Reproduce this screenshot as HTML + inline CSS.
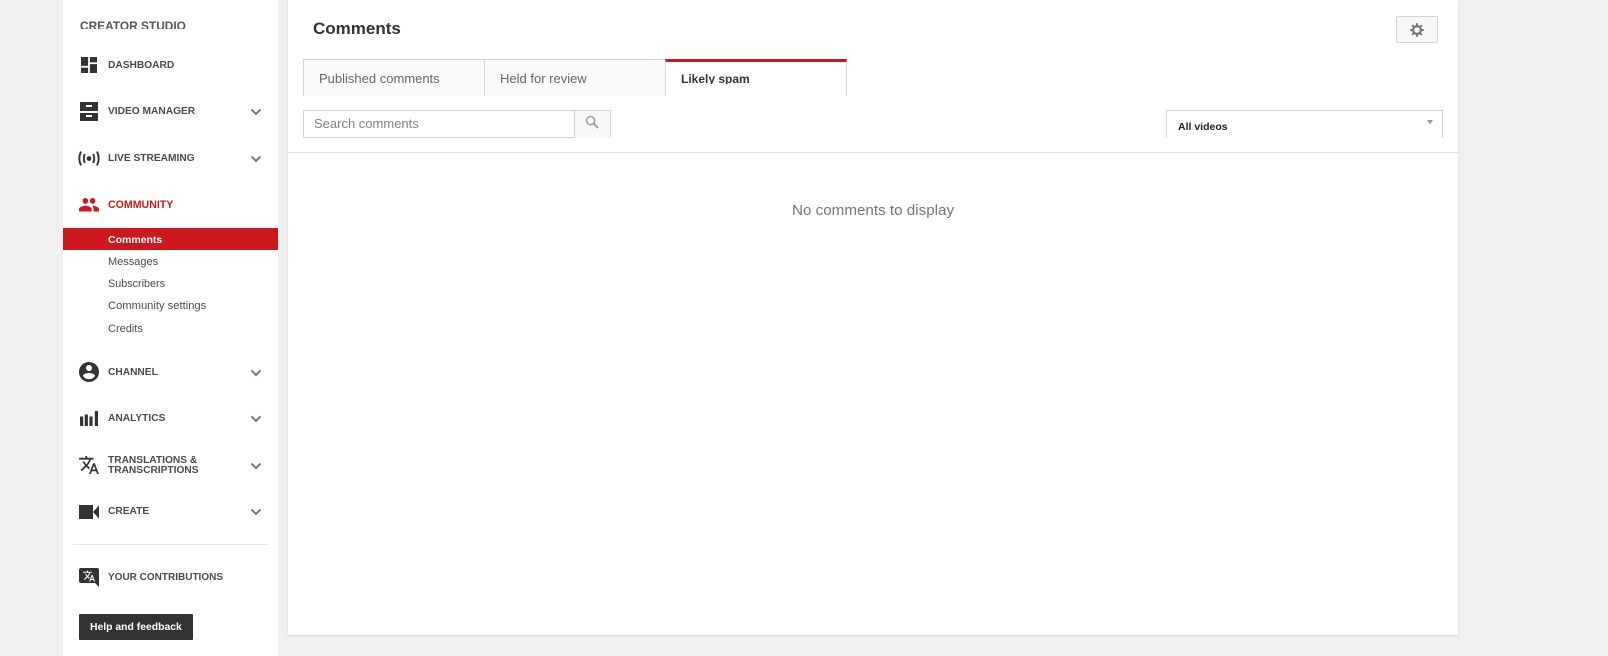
<!DOCTYPE html>
<html><head><meta charset="utf-8">
<style>
html,body{margin:0;padding:0;width:1608px;height:656px;overflow:hidden;background:#f0f0f0;font-family:"Liberation Sans",sans-serif;}
div,svg{position:absolute;}
.t{white-space:nowrap;}
.nav{left:108px;font-size:10.2px;font-weight:bold;color:#4a4a4a;line-height:12px;white-space:nowrap;}
.sub{left:108px;font-size:11px;color:#4a4a4a;line-height:14px;white-space:nowrap;}
.tab{top:59px;height:37px;box-sizing:border-box;border-left:1px solid #d6d6d6;background:#fafafa;border-top:1px solid #d6d6d6;}
</style></head><body>
<div id="side" style="left:63px;top:0;width:215px;height:656px;background:#fff;"></div>
<div style="left:288px;top:0;width:1170px;height:635px;background:#fff;box-shadow:0 1px 2px rgba(0,0,0,.12);"></div>

<div class="t" style="left:80px;top:19px;height:10px;overflow:hidden;font-size:11.900px;line-height:14px;font-weight:bold;color:#555;">CREATOR STUDIO</div>

<svg style="left:81px;top:57px" width="16" height="16" viewBox="3 3 18 18" fill="#333"><path d="M3 13h8V3H3v10zm0 8h8v-6H3v6zm10 0h8V11h-8v10zm0-18v6h8V3h-8z"/></svg>
<div class="nav" style="top:60px;">DASHBOARD</div>

<svg style="left:80px;top:102px" width="18" height="19" viewBox="0 0 18 19"><path fill="#333" fill-rule="evenodd" d="M0 0h18v9H0zM6 3v2h6V3zM0 11h18v8H0zM6 13v2h6v-2z"/></svg>
<div class="nav" style="top:106px;">VIDEO MANAGER</div>
<svg style="left:250px;top:108px" width="12" height="8" viewBox="0 0 12 8"><path d="M1.500 1.500L6 6l4.500-4.500" fill="none" stroke="#777" stroke-width="2"/></svg>

<svg style="left:78px;top:151px" width="22" height="15" viewBox="0 0 22 15" fill="none" stroke="#333" stroke-width="1.900"><circle cx="11" cy="7.500" r="2.400" fill="#333" stroke="none"/><path d="M6.800 3Q4.800 7.500 6.800 12M15.200 3Q17.200 7.500 15.200 12M3 .6Q-.4 7.500 3 14.400M19 .6Q22.400 7.500 19 14.400"/></svg>
<div class="nav" style="top:153px;">LIVE STREAMING</div>
<svg style="left:250px;top:155px" width="12" height="8" viewBox="0 0 12 8"><path d="M1.500 1.500L6 6l4.500-4.500" fill="none" stroke="#777" stroke-width="2"/></svg>

<svg style="left:79px;top:198px" width="20" height="13.500" viewBox="1 5 22 14" preserveAspectRatio="none" fill="#cc181e"><path d="M16 11c1.660 0 2.990-1.340 2.990-3S17.660 5 16 5c-1.660 0-3 1.340-3 3s1.340 3 3 3zm-8 0c1.660 0 2.990-1.340 2.990-3S9.660 5 8 5C6.340 5 5 6.340 5 8s1.340 3 3 3zm0 2c-2.330 0-7 1.170-7 3.500V19h14v-2.500c0-2.330-4.670-3.500-7-3.500zm8 0c-.290 0-.620.020-.970.050 1.160.840 1.970 1.970 1.970 3.450V19h6v-2.500c0-2.330-4.670-3.500-7-3.500z"/></svg>
<div class="nav" style="top:199px;color:#cc181e;font-size:10.600px;">COMMUNITY</div>

<div style="left:63px;top:228px;width:215px;height:22px;background:#cc181e;"></div>
<div class="sub" style="top:233px;height:11px;overflow:hidden;color:#fff;font-weight:bold;font-size:10.500px;">Comments</div>
<div class="sub" style="top:255px;">Messages</div>
<div class="sub" style="top:277px;height:11px;overflow:hidden;font-size:10.800px;">Subscribers</div>
<div class="sub" style="top:299px;font-size:11.200px;">Community settings</div>
<div class="sub" style="top:322px;">Credits</div>

<svg style="left:79px;top:362px" width="20" height="20" viewBox="2 2 20 20" fill="#333"><path d="M12 2C6.480 2 2 6.480 2 12s4.480 10 10 10 10-4.480 10-10S17.520 2 12 2zm0 3c1.660 0 3 1.340 3 3s-1.340 3-3 3-3-1.340-3-3 1.340-3 3-3zm0 14.200c-2.500 0-4.710-1.280-6-3.220.030-1.990 4-3.080 6-3.080 1.990 0 5.970 1.090 6 3.080-1.290 1.940-3.500 3.220-6 3.220z"/></svg>
<div class="nav" style="top:367px;height:8px;overflow:hidden;">CHANNEL</div>
<svg style="left:250px;top:369px" width="12" height="8" viewBox="0 0 12 8"><path d="M1.500 1.500L6 6l4.500-4.500" fill="none" stroke="#777" stroke-width="2"/></svg>

<svg style="left:80px;top:411px" width="18" height="15" viewBox="0 0 18 15" fill="#333"><path d="M0 5.500h3.200V15H0zM4.700 3.500h3.200V15H4.700zM9.400 5.500h3.200V15H9.400zM14.800 0H18v15h-3.200z"/></svg>
<div class="nav" style="top:413px;">ANALYTICS</div>
<svg style="left:250px;top:415px" width="12" height="8" viewBox="0 0 12 8"><path d="M1.500 1.500L6 6l4.500-4.500" fill="none" stroke="#777" stroke-width="2"/></svg>

<svg style="left:79px;top:456px" width="20" height="18" viewBox="1 2 22 20" fill="#333"><path d="M12.870 15.070l-2.540-2.510.030-.030c1.740-1.940 2.980-4.170 3.710-6.530H17V4h-7V2H8v2H1v1.990h11.170C11.500 7.920 10.440 9.750 9 11.350 8.070 10.320 7.300 9.190 6.690 8h-2c.730 1.630 1.730 3.170 2.980 4.560l-5.090 5.020L4 19l5-5 3.110 3.110.760-2.040zM18.500 10h-2L12 22h2l1.120-3h4.750L21 22h2l-4.500-12zm-2.620 7l1.620-4.330L19.120 17h-3.240z"/></svg>
<div class="nav" style="top:456px;line-height:10px;">TRANSLATIONS &amp;<br>TRANSCRIPTIONS</div>
<svg style="left:250px;top:462px" width="12" height="8" viewBox="0 0 12 8"><path d="M1.500 1.500L6 6l4.500-4.500" fill="none" stroke="#777" stroke-width="2"/></svg>

<svg style="left:79px;top:505px" width="20" height="14" viewBox="0 0 20 14" fill="#333"><path d="M0 0h14v14H0zM14 7L20 .5v13z"/></svg>
<div class="nav" style="top:506px;height:9px;overflow:hidden;">CREATE</div>
<svg style="left:250px;top:508px" width="12" height="8" viewBox="0 0 12 8"><path d="M1.500 1.500L6 6l4.500-4.500" fill="none" stroke="#777" stroke-width="2"/></svg>

<div style="left:73px;top:544px;width:195px;height:1px;background:#e2e2e2;"></div>

<svg style="left:79px;top:568px" width="20" height="19" viewBox="0 0 20 19"><path fill="#333" d="M2 0h16a2 2 0 0 1 2 2v17l-4-4H2a2 2 0 0 1-2-2V2a2 2 0 0 1 2-2z"/><g transform="translate(3.500 1.500) scale(.55)"><path fill="#fff" d="M12.870 15.070l-2.540-2.510.030-.030c1.740-1.940 2.980-4.170 3.710-6.530H17V4h-7V2H8v2H1v1.990h11.170C11.500 7.920 10.440 9.750 9 11.350 8.070 10.320 7.300 9.190 6.690 8h-2c.730 1.630 1.730 3.170 2.980 4.560l-5.090 5.020L4 19l5-5 3.110 3.110.760-2.040zM18.500 10h-2L12 22h2l1.120-3h4.750L21 22h2l-4.500-12zm-2.620 7l1.620-4.330L19.120 17h-3.240z"/></g></svg>
<div class="nav" style="top:572px;font-size:10px;">YOUR CONTRIBUTIONS</div>

<div style="left:79px;top:614px;width:114px;height:26px;background:#333;border-radius:1px;"></div>
<div class="t" style="left:90px;top:622px;font-size:10.400px;line-height:12px;font-weight:bold;color:#fff;">Help and feedback</div>

<div class="t" style="left:313px;top:19px;font-size:17px;line-height:20px;font-weight:bold;color:#333;">Comments</div>

<div style="left:1396px;top:16px;width:42px;height:27px;box-sizing:border-box;background:#f8f8f8;border:1px solid #d3d3d3;border-radius:2px;"></div>
<svg style="left:1410px;top:23px" width="14" height="14" viewBox="0 0 14 14" fill="none" stroke="#767676"><circle cx="7" cy="7" r="3.900" stroke-width="2.200"/><path d="M7 .2v2.400M7 11.400v2.400M.2 7h2.400M11.400 7h2.400M2.200 2.200l1.700 1.700M10.100 10.100l1.700 1.700M2.200 11.800l1.700-1.700M10.100 3.900l1.700-1.700" stroke-width="2"/></svg>

<div class="tab" style="left:303px;width:182px;"></div>
<div class="tab" style="left:484px;width:182px;"></div>
<div class="tab" style="left:665px;width:182px;background:#fff;border-right:1px solid #d6d6d6;border-top:3px solid #cc181e;"></div>
<div class="t" style="left:319px;top:71px;height:13px;overflow:hidden;font-size:13px;line-height:16px;color:#666;">Published comments</div>
<div class="t" style="left:500px;top:71px;height:13px;overflow:hidden;font-size:13px;line-height:16px;color:#666;">Held for review</div>
<div class="t" style="left:681px;top:71px;height:13px;overflow:hidden;font-size:12px;line-height:16px;font-weight:bold;color:#333;">Likely spam</div>

<div style="left:303px;top:110px;width:272px;height:28px;box-sizing:border-box;border:1px solid #d3d3d3;background:#fff;"></div>
<div class="t" style="left:314px;top:116px;font-size:13px;line-height:16px;color:#808080;">Search comments</div>
<div style="left:574px;top:110px;width:37px;height:27px;box-sizing:border-box;background:#f8f8f8;border:1px solid #d3d3d3;border-bottom:none;"></div>
<svg style="left:585px;top:115px" width="14" height="14" viewBox="0 0 15 15" fill="none" stroke="#999" stroke-width="1.500"><circle cx="6" cy="6" r="4.300"/><path d="M9.200 9.200L14 14" stroke-width="2"/></svg>

<div style="left:1166px;top:110px;width:277px;height:28px;box-sizing:border-box;background:#fff;border:1px solid #d3d3d3;border-bottom:none;"></div>
<div class="t" style="left:1178px;top:120px;font-size:10.500px;line-height:14px;font-weight:bold;color:#222;">All videos</div>
<svg style="left:1427px;top:120px" width="6" height="5" viewBox="0 0 6 5"><path d="M0 0h6L3 4.500z" fill="#999"/></svg>

<div style="left:288px;top:152px;width:1170px;height:1px;background:#e0e0e0;"></div>
<div class="t" style="left:792px;top:202px;font-size:15.200px;line-height:18px;color:#767676;">No comments to display</div>
</body></html>
